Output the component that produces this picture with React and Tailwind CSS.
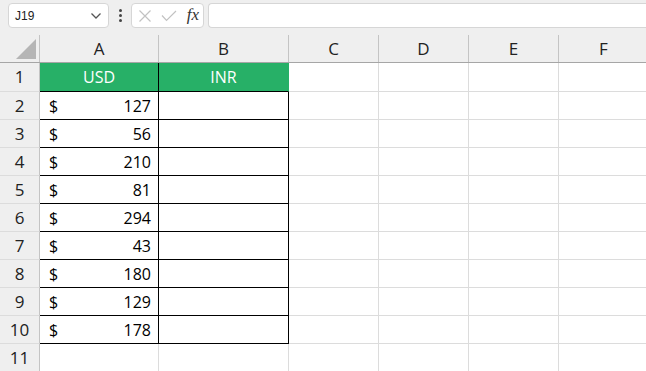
import React from "react";

const cols = [
  { l: "A", w: "w-[119px]" },
  { l: "B", w: "w-[130px]" },
  { l: "C", w: "w-[90px]" },
  { l: "D", w: "w-[90px]" },
  { l: "E", w: "w-[90px]" },
  { l: "F", w: "w-[90px]" },
];

const data = [127, 56, 210, 81, 294, 43, 180, 129, 178];

function RowHeader({ n }) {
  return (
    <div className="w-[40px] shrink-0 h-full bg-[#efefef] border-r border-[#c4c4c4] border-b border-b-[#dcdcdc] flex items-center justify-center text-[17px] text-[#222]">
      {n}
    </div>
  );
}

export default function App() {
  return (
    <div className="w-[646px] h-[371px] overflow-hidden bg-[#efefef] font-['Open_Sans',sans-serif] select-none">
      {/* formula bar */}
      <div className="h-[35px] flex items-start pt-[3px] pl-[8px] gap-0">
        <div className="w-[101px] h-[25px] bg-white border border-[#d6d6d6] rounded-[4px] flex items-center justify-between pl-[6px] pr-[6px]">
          <span className="text-[12px] text-[#222] font-['Liberation_Sans',sans-serif]">J19</span>
          <svg width="12" height="8" viewBox="0 0 12 8" fill="none" stroke="#555" strokeWidth="1.3">
            <path d="M1.5 1.5 L6 6 L10.5 1.5" />
          </svg>
        </div>
        <div className="w-[22px] h-[25px] flex flex-col items-center justify-center gap-[2px]">
          <span className="w-[3px] h-[3px] bg-[#444] rounded-full" />
          <span className="w-[3px] h-[3px] bg-[#444] rounded-full" />
          <span className="w-[3px] h-[3px] bg-[#444] rounded-full" />
        </div>
        <div className="w-[73px] h-[25px] bg-white border border-[#d6d6d6] rounded-[4px] flex items-center pl-[6px] pr-[4px]">
          <svg width="14" height="14" viewBox="0 0 14 14" fill="none" stroke="#c2c2c2" strokeWidth="1.2">
            <path d="M1.5 1.5 L12.5 12.5 M12.5 1.5 L1.5 12.5" />
          </svg>
          <svg className="ml-[9px]" width="16" height="12" viewBox="0 0 16 12" fill="none" stroke="#c2c2c2" strokeWidth="1.2">
            <path d="M1 5.5 L5.5 10.5 L15 1" />
          </svg>
          <span className="ml-auto text-[17px] italic text-[#333] font-['Liberation_Serif',serif] leading-none pb-[2px]">fx</span>
        </div>
        <div className="ml-[4px] flex-1 h-[25px] bg-white border border-[#d6d6d6] rounded-l-[4px] border-r-0" />
      </div>

      {/* column headers */}
      <div className="h-[28px] flex border-b border-[#a6a6a6]">
        <div className="w-[40px] shrink-0 h-full border-r border-[#c4c4c4] relative">
          <svg className="absolute right-[3px] bottom-[3px]" width="20" height="20" viewBox="0 0 20 20">
            <path d="M20 0 L20 20 L0 20 Z" fill="#b5b5b5" />
          </svg>
        </div>
        {cols.map((c) => (
          <div
            key={c.l}
            className={`${c.w} shrink-0 h-full border-r border-[#c4c4c4] flex items-center justify-center text-[17px] text-[#222]`}
          >
            {c.l}
          </div>
        ))}
      </div>

      {/* row 1 */}
      <div className="h-[29px] flex">
        <RowHeader n={1} />
        <div className="w-[119px] shrink-0 h-full bg-[#27b067] border-r border-b border-black flex items-center justify-center text-white text-[16px]">
          USD
        </div>
        <div className="w-[130px] shrink-0 h-full bg-[#27b067] border-r border-r-[#27b067] border-b border-black flex items-center justify-center text-white text-[16px]">
          INR
        </div>
        {[0, 1, 2, 3].map((i) => (
          <div key={i} className="w-[90px] shrink-0 h-full bg-white border-r border-b border-[#dcdcdc]" />
        ))}
      </div>

      {data.map((v, i) => (
        <div key={i} className="h-[28px] flex">
          <RowHeader n={i + 2} />
          <div className="w-[119px] shrink-0 h-full bg-white border-r border-b border-black flex items-center justify-between pl-[9px] pr-[7px] text-[16px] text-black">
            <span>$</span>
            <span>{v}</span>
          </div>
          <div className="w-[130px] shrink-0 h-full bg-white border-r border-b border-black" />
          {[0, 1, 2, 3].map((j) => (
            <div key={j} className="w-[90px] shrink-0 h-full bg-white border-r border-b border-[#dcdcdc]" />
          ))}
        </div>
      ))}

      <div className="h-[28px] flex">
        <RowHeader n={11} />
        <div className="w-[119px] shrink-0 h-full bg-white border-r border-b border-[#dcdcdc]" />
        <div className="w-[130px] shrink-0 h-full bg-white border-r border-b border-[#dcdcdc]" />
        {[0, 1, 2, 3].map((j) => (
          <div key={j} className="w-[90px] shrink-0 h-full bg-white border-r border-b border-[#dcdcdc]" />
        ))}
      </div>
    </div>
  );
}
